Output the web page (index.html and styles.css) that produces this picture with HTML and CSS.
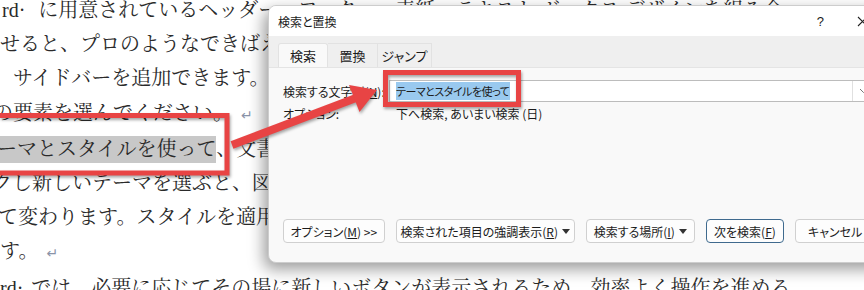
FILE: index.html
```html
<!DOCTYPE html>
<html lang="ja">
<head>
  <meta charset="UTF-8">
  <title>検索と置換</title>
  <link rel="stylesheet" href="styles.css">
</head>
<body>
  <div class="doc">
    <p class="ln l1">rd·<span class="gap"></span>に用意されているヘッダー、フッター、表紙、テキスト ボックス デザインを組み合</p>
    <p class="ln l2">せると、プロのようなできばえの文書を作成できます。たとえば、一致する表紙、ヘッダー、</p>
    <p class="ln l3">サイドバーを追加できます。[挿入] をクリックしてから、それぞれのギャラリーで目的</p>
    <p class="ln l4">の要素を選んでください。<span class="ret">↵</span></p>
    <p class="ln l5"><span class="hl">ーマとスタイルを使って</span>、文書全体の統一感を出すこともできます。[デザイン]</p>
    <p class="ln l6">クし新しいテーマを選ぶと、図やグラフ、SmartArt グラフィックが新しいテーマに合わせ</p>
    <p class="ln l7">て変わります。スタイルを適用すると、新しいテーマに適合するように見出しが変更されま</p>
    <p class="ln l8">す。<span class="ret">↵</span></p>
    <p class="ln l9">rd·<span class="gap2"></span>では、必要に応じてその場に新しいボタンが表示されるため、効率よく操作を進める</p>
  </div>

  <div class="dialog">
    <div class="titlebar">
      <span class="title">検索と置換</span>
      <span class="help">?</span>
      <svg class="close" width="11" height="11" viewBox="0 0 11 11"><path d="M1 1L10 10M10 1L1 10" stroke="#222" stroke-width="1.1"/></svg>
    </div>
    <div class="tabs">
      <span class="tab active">検索</span>
      <span class="tab">置換</span>
      <span class="tab wide">ジャンプ</span>
    </div>
    <div class="panel">
      <div class="row">
        <span class="label">検索する文字列(<u>N</u>):</span>
        <div class="combo">
          <span class="sel">テーマとスタイルを使って</span>
          <span class="drop"><svg width="9" height="6" viewBox="0 0 9 6"><path d="M1 1L4.5 4.5L8 1" fill="none" stroke="#777" stroke-width="1"/></svg></span>
        </div>
      </div>
      <div class="row opt">
        <span class="label">オプション:</span>
        <span class="value">下へ検索, あいまい検索 (日)</span>
      </div>
      <div class="buttons">
        <span class="btn b-opt">オプション(<u>M</u>) &gt;&gt;</span>
        <span class="btn b-hl">検索された項目の強調表示(<u>R</u>)<svg class="caret" width="8" height="5" viewBox="0 0 8 5"><path d="M0 0H8L4 5Z" fill="#333"/></svg></span>
        <span class="btn b-where">検索する場所(<u>I</u>)<svg class="caret" width="8" height="5" viewBox="0 0 8 5"><path d="M0 0H8L4 5Z" fill="#333"/></svg></span>
        <span class="btn b-next default">次を検索(<u>F</u>)</span>
        <span class="btn b-cancel">キャンセル</span>
      </div>
    </div>
  </div>

  <svg class="marks" width="864" height="290" viewBox="0 0 864 290">
    <g fill="none" stroke="#e84444" stroke-width="5">
      <rect x="-10" y="115.5" width="237" height="57.5"/>
      <rect x="385.5" y="72.5" width="133" height="32"/>
    </g>
    <path d="M232 145L356 98" stroke="#e84444" stroke-width="8"/>
    <path d="M377 90L359.5 112 L349 85 Z" fill="#e84444"/>
  </svg>
</body>
</html>
```

FILE: styles.css
```css
body {
  margin: 0;
  width: 864px;
  height: 290px;
  overflow: hidden;
  position: relative;
  background: #ffffff;
  font-family: "Liberation Serif", "Noto Serif CJK JP", "Noto Sans CJK JP", serif;
}
.doc {
  margin-top: -7px;
  color: #2a2a2a;
  font-size: 20px;
  line-height: 34.2px;
}
.ln {
  margin: 0;
  white-space: nowrap;
}
.l1 { text-indent: 2px; }
.l3 { text-indent: 13px; }
.l4 { text-indent: -7px; }
.l5 { text-indent: -3px; }
.l6 { text-indent: -8px; }
.l7 { text-indent: -2px; }
.gap {
  display: inline-block;
  width: 13px;
}
.gap2 {
  display: inline-block;
  width: 8px;
}
.hl {
  background: #c8c8c8;
  padding: 2px 0 3px;
}
.ret {
  color: #8a93a8;
  font-family: "DejaVu Sans", sans-serif;
  font-size: 14px;
  margin-left: 8px;
}

/* dialog */
.dialog {
  position: absolute;
  left: 268px;
  top: 5px;
  width: 620px;
  height: 258px;
  box-sizing: border-box;
  display: flex;
  flex-direction: column;
  background: #f9f9f9;
  border: 1px solid #cdcdcd;
  border-radius: 8px;
  overflow: hidden;
  box-shadow: -4px 6px 16px rgba(0,0,0,0.4);
  font-family: "Noto Sans CJK JP", sans-serif;
  font-size: 12px;
  color: #1b1b1b;
  font-feature-settings: "palt";
}
.titlebar {
  height: 30px;
  flex: none;
  display: flex;
  align-items: center;
  padding-left: 9px;
  background: #ffffff;
}
.help {
  margin-left: auto;
  font-family: "Liberation Sans", sans-serif;
  font-size: 13px;
}
.close {
  margin-left: 33px;
  margin-right: 19px;
}
.tabs {
  height: 32px;
  flex: none;
  box-sizing: border-box;
  display: flex;
  align-items: flex-end;
  padding-left: 9px;
  background: #efefef;
  border-bottom: 1px solid #e4e4e4;
}
.tab {
  width: 50px;
  height: 24px;
  box-sizing: border-box;
  display: flex;
  align-items: center;
  justify-content: center;
  font-size: 13px;
  border: 1px solid #e2e2e2;
  border-bottom: none;
  border-left: none;
}
.tab.active {
  background: #f9f9f9;
  border-left: 1px solid #e2e2e2;
  border-radius: 3px 3px 0 0;
}
.tab.wide {
  width: 54px;
}
.panel {
  flex: 1;
  display: flex;
  flex-direction: column;
  padding: 12px 12px 19px 14px;
}
.row {
  display: flex;
  align-items: center;
}
.label {
  width: 106px;
  flex: none;
}
.combo {
  flex: 1;
  height: 22px;
  box-sizing: border-box;
  display: flex;
  align-items: center;
  padding-left: 6px;
  background: #ffffff;
  border: 1px solid #bcbcbc;
}
.sel {
  background: #99c9ef;
  line-height: 18px;
  font-size: 11px;
  letter-spacing: -0.5px;
  padding-right: 1px;
}
.drop {
  margin-left: auto;
  width: 21px;
  height: 100%;
  display: flex;
  align-items: center;
  justify-content: center;
  border-left: 1px solid #e0e0e0;
}
.opt {
  margin-top: 3px;
  line-height: 18px;
}
.value {
  padding-left: 7px;
}
.buttons {
  margin-top: auto;
  display: flex;
  gap: 11px;
}
.btn {
  height: 24px;
  box-sizing: border-box;
  display: flex;
  align-items: center;
  justify-content: center;
  background: #fdfdfd;
  border: 1px solid #d0d0d0;
  border-radius: 4px;
}
.btn.default {
  border-color: #3f6a8e;
}
.b-opt { width: 102px; }
.b-hl { width: 180px; }
.b-where { width: 109px; }
.b-next { width: 79px; }
.b-cancel { width: 80px; }
.caret {
  margin-left: 4px;
}

/* annotations */
.marks {
  position: absolute;
  left: 0;
  top: 0;
  pointer-events: none;
  filter: drop-shadow(1px 2px 1.5px rgba(0,0,0,0.35));
}
```
